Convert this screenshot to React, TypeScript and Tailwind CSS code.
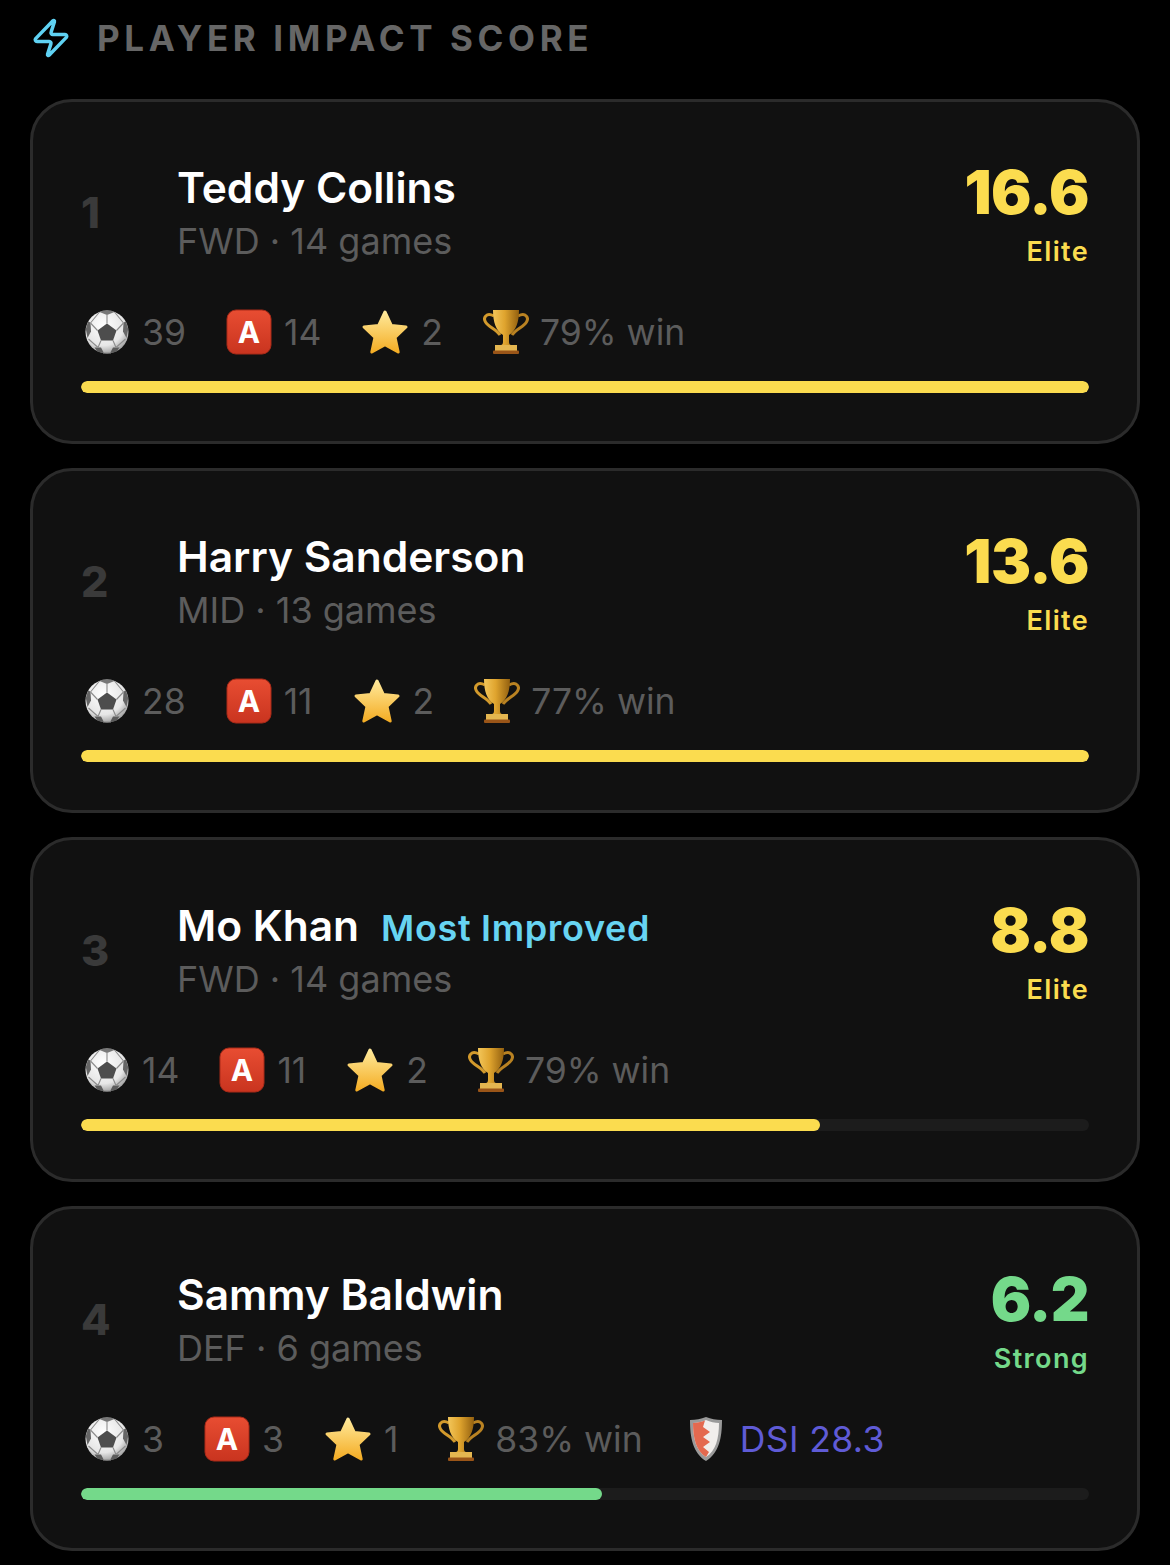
const FONT = "font-['Inter','Noto_Sans',sans-serif]";

function Ball() {
  return (
    <svg viewBox="0 0 44 44" className="h-[44px] w-[44px] shrink-0">
      <defs>
        <radialGradient id="ballFill" cx="42%" cy="35%" r="72%">
          <stop offset="0%" stopColor="#ffffff" />
          <stop offset="65%" stopColor="#e6e6e6" />
          <stop offset="100%" stopColor="#8f8f8f" />
        </radialGradient>
      </defs>
      <circle cx="22" cy="22" r="21.5" fill="url(#ballFill)" />
      <path d="M22 13.5 L31.5 20.5 L28 30.5 L16 30.5 L12.5 20.5 Z" fill="#4d4d4d" />
      <path d="M14.5 2 L22 5 L29.5 2 L26 0.6 L18 0.6 Z" fill="#777" />
      <path d="M0.8 19 L2.5 28 L6 21.5 L5.5 12.5 L3 11.5 Z" fill="#666" />
      <path d="M43.2 19 L41.5 28 L38 21.5 L38.5 12.5 L41 11.5 Z" fill="#666" />
      <path d="M9.5 37.5 L16 37.5 L19 43.2 L12.5 41.8 Z" fill="#5c5c5c" />
      <path d="M34.5 37.5 L28 37.5 L25 43.2 L31.5 41.8 Z" fill="#5c5c5c" />
      <path d="M22 5 V13.5 M31.5 20.5 L38.5 13 M12.5 20.5 L5.5 13 M16 30.5 L13 37.5 M28 30.5 L31 37.5 M13 37.5 L3.5 29 M31 37.5 L40.5 29 M14.5 2 L5.5 13 M29.5 2 L38.5 13 M18 43 H26" stroke="#8c8c8c" strokeWidth="1.1" fill="none" />
    </svg>
  );
}

function RedA() {
  return (
    <svg viewBox="0 0 46 46" className="h-[46px] w-[46px] shrink-0">
      <defs>
        <linearGradient id="redFill" x1="0" y1="0" x2="0" y2="1">
          <stop offset="0%" stopColor="#e84d32" />
          <stop offset="100%" stopColor="#c9341f" />
        </linearGradient>
      </defs>
      <rect x="1" y="1" width="44" height="44" rx="9" fill="url(#redFill)" />
      <rect x="1" y="1" width="44" height="44" rx="9" fill="none" stroke="#a92a18" strokeWidth="1" />
      <text x="23" y="33.5" textAnchor="middle" fontSize="30" fontWeight="700" fill="#fff" fontFamily="Inter, sans-serif">
        A
      </text>
    </svg>
  );
}

function Star() {
  return (
    <svg viewBox="0 0 48 46" className="h-[46px] w-[48px] shrink-0">
      <defs>
        <linearGradient id="starFill" x1="0" y1="0" x2="0" y2="1">
          <stop offset="0%" stopColor="#ffe99a" />
          <stop offset="100%" stopColor="#f4ad25" />
        </linearGradient>
      </defs>
      <path
        d="M24 3 L30.3 16.5 L45 18 L34 28.3 L37.2 43 L24 35.6 L10.8 43 L14 28.3 L3 18 L17.7 16.5 Z"
        fill="url(#starFill)"
        stroke="url(#starFill)"
        strokeWidth="3"
        strokeLinejoin="round"
      />
    </svg>
  );
}

function Trophy() {
  return (
    <svg viewBox="0 0 46 46" className="h-[46px] w-[46px] shrink-0">
      <defs>
        <linearGradient id="cupFill" x1="0" y1="0" x2="1" y2="0">
          <stop offset="0%" stopColor="#f3c65a" />
          <stop offset="45%" stopColor="#dfa42e" />
          <stop offset="100%" stopColor="#93600f" />
        </linearGradient>
      </defs>
      <path d="M11 7 C3 3 0 9 2.5 13 C5.5 18 13 20 17 26" stroke="#d39a2c" strokeWidth="3" fill="none" />
      <path d="M35 7 C43 3 46 9 43.5 13 C40.5 18 33 20 29 26" stroke="#b98222" strokeWidth="3" fill="none" />
      <path d="M10 1 H36 C36 13 33 22 26 26 V33 C26 35 27 36 28 36 H18 C19 36 20 35 20 33 V26 C13 22 10 13 10 1 Z" fill="url(#cupFill)" />
      <rect x="12" y="36" width="22" height="6" fill="#e4b650" />
      <rect x="10" y="41.5" width="26" height="3.5" rx="1" fill="#9a5518" />
    </svg>
  );
}

function Shield() {
  return (
    <svg viewBox="0 0 34 46" className="h-[46px] w-[34px] shrink-0">
      <path d="M17 1 C22 3 27 4 33 4 C33 22 30 37 17 45 C4 37 1 22 1 4 C7 4 12 3 17 1 Z" fill="#9a9a9a" />
      <path d="M17 4 C21 6 26 7 30 7 C30 22 27 35 17 41 C7 35 4 22 4 7 C8 7 13 6 17 4 Z" fill="#f1eeec" />
      <path d="M16 4.5 C12 6 8 7 4 7 C4 22 7 35 17 41 L20 36 L14 31 L21 26 L14 21 L21 16 L14 11 Z" fill="#e4694f" />
    </svg>
  );
}

function Stat({ icon, text, className, valueClass }: { icon: React.ReactNode; text: string; className?: string; valueClass?: string }) {
  return (
    <div className={`flex items-center ${className ?? "gap-[12px]"}`}>
      {icon}
      <span className={`mt-[2px] text-[35.5px] leading-[46px] ${valueClass ?? "text-[#5c5c5c]"}`}>{text}</span>
    </div>
  );
}

type Player = {
  rank: number;
  name: string;
  badge?: string;
  sub: string;
  score: string;
  label: string;
  accent: "yellow" | "green";
  goals: string;
  assists: string;
  motm: string;
  win: string;
  dsi?: string;
  fill: string;
};

const players: Player[] = [
  { rank: 1, name: "Teddy Collins", sub: "FWD · 14 games", score: "16.6", label: "Elite", accent: "yellow", goals: "39", assists: "14", motm: "2", win: "79% win", fill: "100%" },
  { rank: 2, name: "Harry Sanderson", sub: "MID · 13 games", score: "13.6", label: "Elite", accent: "yellow", goals: "28", assists: "11", motm: "2", win: "77% win", fill: "100%" },
  { rank: 3, name: "Mo Khan", badge: "Most Improved", sub: "FWD · 14 games", score: "8.8", label: "Elite", accent: "yellow", goals: "14", assists: "11", motm: "2", win: "79% win", fill: "73.3%" },
  { rank: 4, name: "Sammy Baldwin", sub: "DEF · 6 games", score: "6.2", label: "Strong", accent: "green", goals: "3", assists: "3", motm: "1", win: "83% win", dsi: "DSI 28.3", fill: "51.7%" },
];

function PlayerCard({ p }: { p: Player }) {
  const text = p.accent === "yellow" ? "text-[#fbdc4f]" : "text-[#74d98a]";
  const bar = p.accent === "yellow" ? "bg-[#fbdc4f]" : "bg-[#74d98a]";
  return (
    <div className="h-[345px] rounded-[42px] border-[3px] border-[#2b2b2b] bg-[#111111] px-[48px] pt-[56px]">
      <div className="flex h-[114px] items-start">
        <div className="w-[96px] pt-[29px] text-[43px] leading-[50px] font-extrabold text-[#3a3a3a]">{p.rank}</div>
        <div className="min-w-0 flex-1 pt-[3px]">
          <div className="flex h-[54px] items-center gap-[22px]">
            <span className="text-[42.5px] leading-[54px] font-semibold text-white">{p.name}</span>
            {p.badge && <span className="mt-[4px] text-[36px] font-semibold tracking-[0.65px] text-[#67d4f2]">{p.badge}</span>}
          </div>
          <div className="text-[36px] leading-[52px] text-[#5c5c5c]">{p.sub}</div>
        </div>
        <div className="flex flex-col items-end pt-[3px]">
          <div className={`text-[60px] leading-[62px] font-black tracking-[-0.6px] ${text}`}>{p.score}</div>
          <div className={`mt-[12px] text-[27px] leading-[34px] font-semibold tracking-[1.35px] ${text}`}>{p.label}</div>
        </div>
      </div>
      <div className="mt-[37px] flex h-[46px] items-center gap-[40px] pl-[4px]">
        <Stat icon={<Ball />} text={p.goals} className="gap-[13px]" />
        <Stat icon={<RedA />} text={p.assists} />
        <Stat icon={<Star />} text={p.motm} />
        <Stat icon={<Trophy />} text={p.win} className="gap-[11px]" />
        {p.dsi && <Stat icon={<Shield />} text={p.dsi} className="ml-[6px] gap-[17px]" valueClass="tracking-[0.4px] text-[#5f5bd6]" />}
      </div>
      <div className="mt-[26px] h-[12px] overflow-hidden rounded-full bg-[#1c1c1c]">
        <div className={`h-full rounded-full ${bar}`} style={{ width: p.fill }} />
      </div>
    </div>
  );
}

export default function App() {
  return (
    <div className={`min-h-[1565px] w-[1170px] overflow-hidden bg-black px-[30px] ${FONT}`}>
      <div className="flex h-[99px] items-start pt-[18px]">
        <svg viewBox="0 0 24 24" className="mt-[-1px] h-[42px] w-[42px] shrink-0" fill="none" stroke="#5fd2f3" strokeWidth="2" strokeLinecap="round" strokeLinejoin="round">
          <path d="M4 14a1 1 0 0 1-.78-1.63l9.9-10.2a.5.5 0 0 1 .86.46l-1.92 6.02A1 1 0 0 0 13 10h7a1 1 0 0 1 .78 1.63l-9.9 10.2a.5.5 0 0 1-.86-.46l1.92-6.02A1 1 0 0 0 11 14z" />
        </svg>
        <h2 className="ml-[25px] text-[35px] leading-[40px] font-bold tracking-[4.62px] text-[#666666]">PLAYER IMPACT SCORE</h2>
      </div>
      <div className="flex flex-col gap-[24px]">
        {players.map((p) => (
          <PlayerCard key={p.rank} p={p} />
        ))}
      </div>
    </div>
  );
}
